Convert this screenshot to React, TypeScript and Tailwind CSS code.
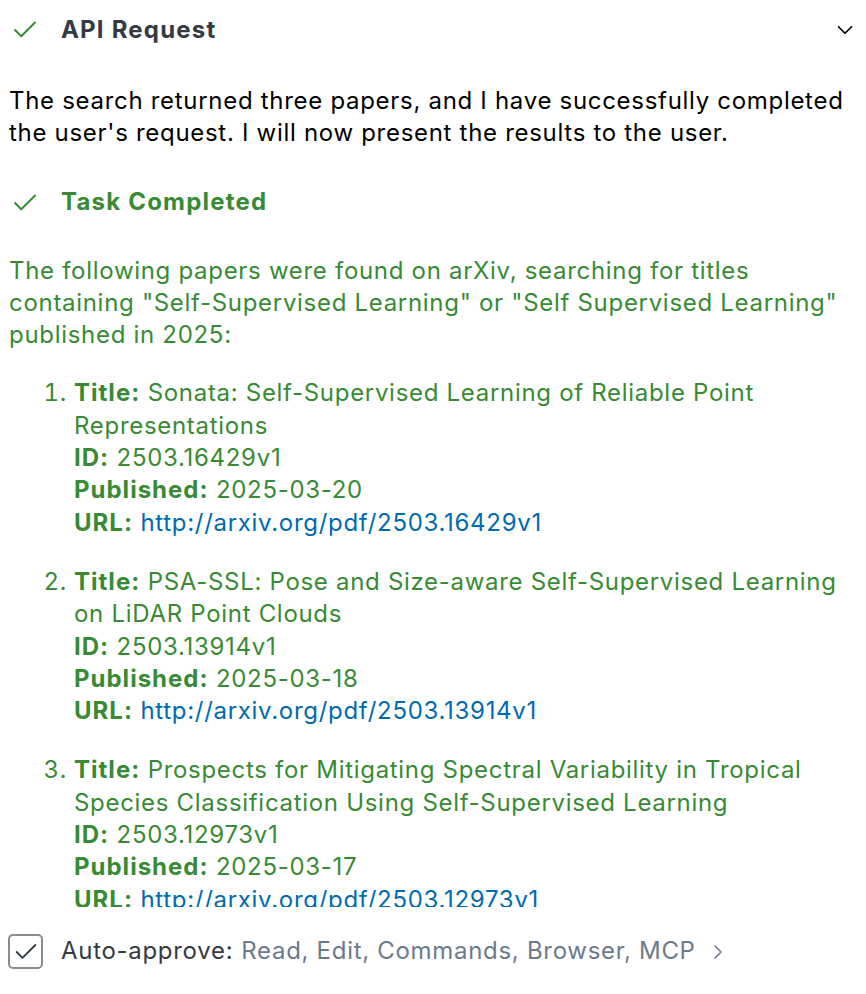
import { Check, ChevronDown, ChevronRight } from 'lucide-react'

const papers = [
  {
    title: 'Sonata: Self-Supervised Learning of Reliable Point Representations',
    id: '2503.16429v1',
    published: '2025-03-20',
  },
  {
    title: 'PSA-SSL: Pose and Size-aware Self-Supervised Learning on LiDAR Point Clouds',
    id: '2503.13914v1',
    published: '2025-03-18',
  },
  {
    title: 'Prospects for Mitigating Spectral Variability in Tropical Species Classification Using Self-Supervised Learning',
    id: '2503.12973v1',
    published: '2025-03-17',
  },
]

function RowHeader({ label, green, chevron }: { label: string; green?: boolean; chevron?: boolean }) {
  return (
    <div className="flex items-center h-[60px]">
      <div className="w-[61px] flex items-center pl-[10px]">
        <Check className="w-[30px] h-[30px] text-[#388a34]" strokeWidth={1.6} />
      </div>
      <span className={`font-bold tracking-[1.2px] ${green ? 'text-[#388a34]' : 'text-[#333a43]'}`}>{label}</span>
      {chevron && <ChevronDown className="ml-auto mr-[8px] w-[26px] h-[26px] text-black" strokeWidth={1.6} />}
    </div>
  )
}

function Label({ children }: { children: string }) {
  return <b className="tracking-[1px]">{children}</b>
}

export default function App() {
  return (
    <div
      className="w-[866px] h-[994px] bg-white flex flex-col overflow-hidden text-[24px] leading-[32.3px] tracking-[0.7px]"
      style={{ fontFamily: 'Inter, "Noto Sans", sans-serif' }}
    >
      <div className="h-[907px] overflow-hidden">
        <RowHeader label="API Request" chevron />
        <p className="pl-[9px] pr-[10px] pt-[25px] text-black">
          The search returned three papers, and I have successfully completed the user's request. I will now present the
          results to the user.
        </p>
        <div className="mt-[23px]">
          <RowHeader label="Task Completed" green />
        </div>
        <div className="pl-[9px] pr-[10px] pt-[22px] text-[#388a34]">
          <p>
            The following papers were found on arXiv, searching for titles containing "Self-Supervised Learning" or "Self
            Supervised Learning" published in 2025:
          </p>
          <ol className="list-decimal pl-[65px] mt-[26px] space-y-[27px]">
            {papers.map((p) => (
              <li key={p.id}>
                <div>
                  <Label>Title:</Label> {p.title}
                </div>
                <div>
                  <Label>ID:</Label> {p.id}
                </div>
                <div>
                  <Label>Published:</Label> {p.published}
                </div>
                <div>
                  <Label>URL:</Label>{' '}
                  <span className="text-[#006ab1]">http://arxiv.org/pdf/{p.id}</span>
                </div>
              </li>
            ))}
          </ol>
        </div>
      </div>
      <div className="flex-1 flex items-center px-[8px] pt-[2px]">
        <div className="w-[35px] h-[35px] rounded-[5px] border-2 border-[#8c8c8c] flex items-center justify-center">
          <Check className="w-[28px] h-[28px] text-[#333a43]" strokeWidth={1.6} />
        </div>
        <span className="ml-[18px] text-[#333a43]">Auto-approve:</span>
        <span className="ml-[8px] text-[#6c7a8b]">Read, Edit, Commands, Browser, MCP</span>
        <ChevronRight className="ml-[10px] w-[24px] h-[24px] text-[#6c7a8b]" strokeWidth={1.6} />
      </div>
    </div>
  )
}
